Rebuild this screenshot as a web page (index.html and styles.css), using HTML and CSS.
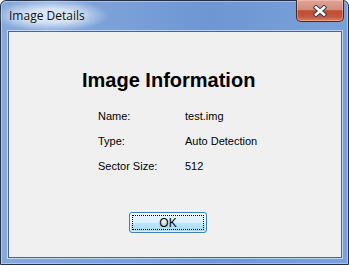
FILE: index.html
```html
<!DOCTYPE html>
<html lang="en">
<head>
    <meta charset="UTF-8">
    <title>Image Details</title>
    <link rel="stylesheet" href="styles.css">
</head>
<body>
    <div class="window">
        <div class="titlebar">
            <span class="title">Image Details</span>
            <button class="close-btn" aria-label="Close">
                <svg width="18" height="12" viewBox="0 0 18 12">
                    <path d="M5 2.5 L13 9.5 M13 2.5 L5 9.5" stroke="#3a3f4a" stroke-width="4.5" stroke-linecap="square"/>
                    <path d="M5 2.5 L13 9.5 M13 2.5 L5 9.5" stroke="#ffffff" stroke-width="2.6" stroke-linecap="square"/>
                </svg>
            </button>
        </div>
        <div class="client">
            <h1>Image Information</h1>
            <div class="info">
                <span>Name:</span><span>test.img</span>
                <span>Type:</span><span>Auto Detection</span>
                <span>Sector Size:</span><span>512</span>
            </div>
            <div class="actions">
                <button class="ok-btn"><span>OK</span></button>
            </div>
        </div>
    </div>
</body>
</html>
```

FILE: styles.css
```css
html, body {
    margin: 0;
    padding: 0;
}
body {
    width: 349px;
    height: 265px;
    overflow: hidden;
    background: #ffffff;
}
.window {
    box-sizing: border-box;
    width: 349px;
    height: 265px;
    border: 1px solid #23324a;
    border-radius: 6px 6px 0 0;
    background: linear-gradient(90deg, #86a9dc 0%, #7aa0d8 35%, #6d96d3 60%, #7aa1d8 100%);
    box-shadow: inset 0 0 0 1px rgba(255, 255, 255, 0.35);
    display: flex;
    flex-direction: column;
    padding: 0 6px 6px 7px;
}
.titlebar {
    height: 30px;
    display: flex;
    align-items: flex-start;
    justify-content: space-between;
    position: relative;
    z-index: 0;
}
.title {
    margin-top: 6px;
    margin-left: 1px;
    font-family: "Open Sans", "Liberation Sans", sans-serif;
    font-size: 12px;
    color: #111111;
    position: relative;
    text-shadow: 0 0 8px rgba(255, 255, 255, 0.9), 0 0 14px rgba(255, 255, 255, 0.8);
}
.title::before {
    content: "";
    position: absolute;
    left: -14px;
    right: -24px;
    top: -8px;
    bottom: -8px;
    background: radial-gradient(closest-side, rgba(225, 236, 250, 0.85) 40%, rgba(225, 236, 250, 0) 100%);
    z-index: -1;
}
.close-btn {
    margin-top: -1px;
    margin-right: -2px;
    width: 48px;
    height: 22px;
    border: 1px solid #4a2a26;
    border-top: none;
    border-radius: 0 0 5px 5px;
    background: linear-gradient(180deg, #dfa596 0%, #d48b7a 45%, #be4b32 52%, #c5573d 80%, #d98368 100%);
    box-shadow: inset 0 0 0 1px rgba(255, 215, 205, 0.4);
    display: flex;
    align-items: center;
    justify-content: center;
    padding: 0;
}
.client {
    flex: 1;
    background: #f0f0f0;
    border: 1px solid #4d6488;
    box-shadow: 0 0 0 1px rgba(255, 255, 255, 0.55);
    font-family: "Liberation Sans", Arial, sans-serif;
    color: #000000;
}
h1 {
    margin: 37px 0 0 73px;
    font-family: "Liberation Sans", Arial, sans-serif;
    font-size: 20px;
    line-height: 23px;
    font-weight: bold;
}
.info {
    display: grid;
    grid-template-columns: 87px auto;
    row-gap: 11px;
    margin: 17px 0 0 89px;
    font-size: 11px;
    line-height: 14px;
}
.actions {
    margin: 39px 0 0 120px;
}
.ok-btn {
    width: 78px;
    height: 21px;
    padding: 2px;
    border: 1px solid #3c7fb1;
    border-radius: 3px;
    background: linear-gradient(180deg, #eaf6fd 0%, #d9f0fc 50%, #bee6fd 51%, #a7d9f5 100%);
    box-shadow: inset 0 0 0 1px rgba(255, 255, 255, 0.6);
    font-family: "Liberation Sans", Arial, sans-serif;
    font-size: 12px;
    color: #000000;
}
.ok-btn span {
    display: flex;
    align-items: center;
    justify-content: center;
    height: 100%;
    box-sizing: border-box;
    border: 1px dotted #000000;
}
```
